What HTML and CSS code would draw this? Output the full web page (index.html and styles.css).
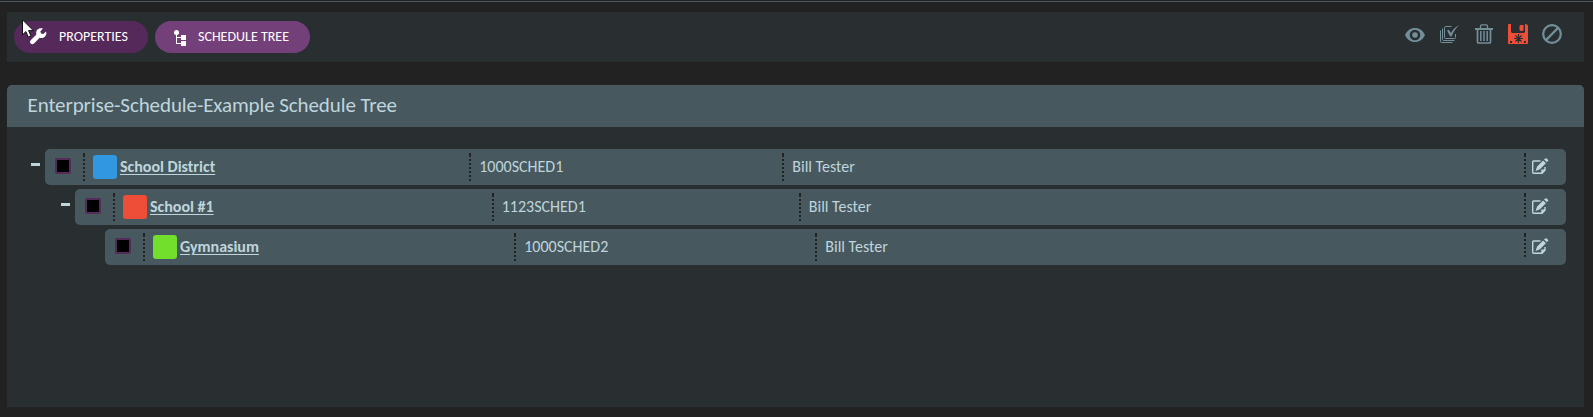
FILE: index.html
```html
<!DOCTYPE html>
<html lang="en">
<head>
<meta charset="utf-8">
<title>Schedule Tree</title>
<link rel="stylesheet" href="styles.css">
</head>
<body>
<header class="toolbar">
  <nav class="tabs">
    <button class="tab tab-dark">
      <svg class="wrench" width="17" height="17" viewBox="0 0 17 17"><path fill="#fff" d="M16 3.4 13.4 6 11 5.400 10.400 3.300 13 .6C11-.2 8.600.2 7.200 1.800 6 3.200 5.900 4.900 6.400 6.400L.7 12.200C-.2 13.200-.2 14.600.7 15.500 1.700 16.400 3 16.400 4 15.500L9.700 9.800C11.500 10.500 13.500 10 15 8.500 16.400 7.100 16.600 5.100 16 3.400Z"/></svg>
      <span class="label">PROPERTIES</span>
    </button>
    <button class="tab tab-light">
      <svg class="tree-icon" width="13" height="16" viewBox="0 0 13 16"><g fill="#fff"><circle cx="2.500" cy="2.500" r="2.500"/><path d="M2 4h1v9h5v1H2zM3 7h5v1H3zM7 5h5v5H7zM7 11h5v5H7z"/></g></svg>
      <span class="label">SCHEDULE TREE</span>
    </button>
  </nav>
  <div class="actions">
    <svg width="20" height="20" viewBox="0 0 20 20"><path fill="#728f9a" fill-rule="evenodd" d="M0 11C2 6.500 5.700 4 10 4s8 2.500 10 7c-2 4.500-5.700 7-10 7S2 15.500 0 11ZM10 5.700a5.300 5.300 0 1 0 0 10.600 5.300 5.300 0 0 0 0-10.600Z"/><circle cx="10" cy="11" r="2.800" fill="#728f9a"/></svg>
    <svg width="20" height="20" viewBox="0 0 20 20"><g fill="none" stroke="#728f9a"><path d="M11.500 2.500h-6q-1 0-1 1v10q0 1 1 1h9q1 0 1-1V10M2.500 4.500v11q0 1 1 1h11M.5 6.500v11q0 1 1 1h11"/></g><path fill="#728f9a" d="m7 6.500 1.800-.8 2.200 3.200C13 5.500 15.500 2.800 19.500 1 16 4 13.500 7.500 11.500 12.500h-1.300Z"/></svg>
    <svg width="20" height="20" viewBox="0 0 20 20"><path fill="none" stroke="#728f9a" stroke-width="1.300" d="M6.500 4V2q0-1.200 1.200-1.200h4.600q1.200 0 1.200 1.200v2"/><path fill="#728f9a" d="M1 4h18v2H1z"/><path fill="none" stroke="#728f9a" stroke-width="1.700" d="M3.500 6v12q0 1 1 1h11q1 0 1-1V6"/><path fill="none" stroke="#728f9a" stroke-width="1.500" d="M6.800 7v10M10 7v10M13.200 7v10"/></svg>
    <svg width="20" height="20" viewBox="0 0 20 20"><path fill="#ee4e37" fill-rule="evenodd" d="M1 0h2v8l1 1h12l1-1V0h1l2 1.500V19q0 1-1 1H1q-1 0-1-1V1q0-1 1-1ZM2 17v2h2v-2ZM16 17v2h2v-2ZM11.500 2l1-1h3v5l-1 1h-2l-1-1Z"/><path stroke="#292e31" stroke-width="1.200" d="M10.500 10v9M6 14.500h9M7.500 11.500l6 6M13.500 11.500l-6 6"/></svg>
    <svg width="20" height="20" viewBox="0 0 20 20"><g fill="none" stroke="#728f9a" stroke-width="2.200"><circle cx="10" cy="10" r="8.800"/><path d="M16.100 3.900 3.900 16.100"/></g></svg>
  </div>
  <svg class="pointer" width="12" height="20" viewBox="0 0 12 20"><path d="M.5.8v15l3.400-3.200 2.300 5.400 2.700-1.200-2.300-5.200h4.700Z" fill="#fff" stroke="#111"/></svg>
</header>

<main class="panel">
  <h1 class="panel-title"><span class="title-text">Enterprise-Schedule-Example Schedule Tree</span></h1>
  <div class="tree">
    <div class="node">
      <span class="toggle"></span>
      <div class="row">
        <span class="check"></span>
        <div class="cell"><span class="swatch blue"></span><a class="name">School District</a></div>
        <div class="cell code">1000SCHED1</div>
        <div class="cell owner">Bill Tester</div>
        <div class="cell edit"><svg width="17" height="17" viewBox="0 0 17 17"><path fill="none" stroke="#bed5dc" stroke-width="1.400" d="M8.500 3H1.700q-1 0-1 1v10.300q0 1 1 1H10l3-3V9M10 15v-2.700h3"/><path fill="#bed5dc" d="m3.500 13 1.600-4.600 6-6 2.800 2.800-6 6ZM12 1.500 13.300.4q.7-.5 1.400 0l1.300 1.300q.6.700 0 1.400l-1.200 1.200Z"/></svg></div>
      </div>
    </div>
    <div class="node level-2">
      <span class="toggle"></span>
      <div class="row">
        <span class="check"></span>
        <div class="cell"><span class="swatch red"></span><a class="name">School #1</a></div>
        <div class="cell code">1123SCHED1</div>
        <div class="cell owner">Bill Tester</div>
        <div class="cell edit"><svg width="17" height="17" viewBox="0 0 17 17"><path fill="none" stroke="#bed5dc" stroke-width="1.400" d="M8.500 3H1.700q-1 0-1 1v10.300q0 1 1 1H10l3-3V9M10 15v-2.700h3"/><path fill="#bed5dc" d="m3.500 13 1.600-4.600 6-6 2.800 2.800-6 6ZM12 1.500 13.300.4q.7-.5 1.400 0l1.300 1.300q.6.700 0 1.400l-1.200 1.200Z"/></svg></div>
      </div>
    </div>
    <div class="node level-3">
      <span class="toggle leaf"></span>
      <div class="row">
        <span class="check"></span>
        <div class="cell"><span class="swatch green"></span><a class="name">Gymnasium</a></div>
        <div class="cell code">1000SCHED2</div>
        <div class="cell owner">Bill Tester</div>
        <div class="cell edit"><svg width="17" height="17" viewBox="0 0 17 17"><path fill="none" stroke="#bed5dc" stroke-width="1.400" d="M8.500 3H1.700q-1 0-1 1v10.300q0 1 1 1H10l3-3V9M10 15v-2.700h3"/><path fill="#bed5dc" d="m3.500 13 1.600-4.600 6-6 2.800 2.800-6 6ZM12 1.500 13.300.4q.7-.5 1.400 0l1.300 1.300q.6.700 0 1.400l-1.200 1.200Z"/></svg></div>
      </div>
    </div>
  </div>
</main>
</body>
</html>
```
FILE: styles.css
```css
* { box-sizing: border-box; }
body {
  margin: 0;
  height: 417px;
  padding: 11px 9px 10px 7px;
  display: flex;
  flex-direction: column;
  gap: 23px;
  overflow: hidden;
  background: linear-gradient(#475860, #475860) 0 1px / 100% 1px no-repeat #222;
  font-family: Carlito, Lato, "Noto Sans", sans-serif;
  font-size: 16px;
  color: #bed5dc;
}
.toolbar {
  position: relative;
  height: 50px;
  margin-top: 1px;
  flex: none;
  display: flex;
  justify-content: space-between;
  padding: 9px 22px 0 7px;
  background: #292e31;
}
.tabs { display: flex; gap: 7px; }
.tab {
  height: 32px;
  display: flex;
  align-items: center;
  border: 0;
  border-radius: 16px;
  color: #fff;
  font: 14px/18px Carlito, Lato, "Noto Sans", sans-serif;
  white-space: nowrap;
}
.tab-dark { width: 134px; padding: 0 0 2px 16px; gap: 12px; background: #55295a; }
.tab-dark .label { padding-top: 2px; }
.tab-light { width: 155px; padding: 2px 0 0 19px; gap: 11px; background: #744079; }
.tab-light .label { padding-bottom: 2px; }
.actions { display: flex; gap: 14.200px; padding-top: 3px; }
.actions svg:nth-child(2) { margin: 0 -0.600px 0 0.600px; }
.actions svg:nth-child(4) { margin: 0 -0.600px 0 0.600px; }
.pointer { position: absolute; left: 15px; top: 7px; }
.panel {
  flex: 1;
  background: #292e31;
  border-radius: 5px 5px 0 0;
}
.panel-title {
  margin: 0;
  height: 42px;
  padding-left: 20.500px;
  border-radius: 5px 5px 0 0;
  background: #48585f;
  font-size: 21px;
  font-weight: 400;
  letter-spacing: -0.100px;
  line-height: 40px;
}
.tree {
  display: flex;
  flex-direction: column;
  gap: 4px;
  padding: 22px 18px 0 24px;
}
.node { display: flex; gap: 5px; }
.level-2 { padding-left: 30px; }
.level-3 { padding-left: 60px; }
.toggle { width: 9px; height: 3px; margin-top: 14px; background: #bed5dc; }
.leaf { visibility: hidden; }
.row {
  flex: 1;
  height: 36px;
  display: grid;
  grid-template-columns: 38px calc(25% + 6px) calc(20% + 8.800px) 1fr 42px;
  align-items: start;
  padding-top: 4px;
  border-radius: 5px;
  background: #48585f;
}
.check {
  width: 16px;
  height: 16px;
  margin: 5px 0 0 10px;
  border: 2px solid #532c59;
  border-radius: 2px;
  background: #000;
}
.cell {
  height: 28px;
  display: flex;
  align-items: center;
  background:
    linear-gradient(#222, #222) 0 0 / 2px 2px no-repeat,
    repeating-linear-gradient(transparent 0 2px, #222 2px 4px) 0 0 / 2px 100% no-repeat;
}
.code, .owner { padding: 0 0 1px 10px; }
.edit { height: 24px; padding: 2px 0 0 8px; }
.swatch { width: 24px; height: 24px; margin: 0 3px 0 10px; border-radius: 3px; }
.blue { background: #3197e0; }
.red { background: #ee4e37; }
.green { background: #72df2c; }
.name { padding-bottom: 1px; font-weight: 700; text-decoration: underline; text-underline-offset: 2px; text-decoration-thickness: 1px; }
```
